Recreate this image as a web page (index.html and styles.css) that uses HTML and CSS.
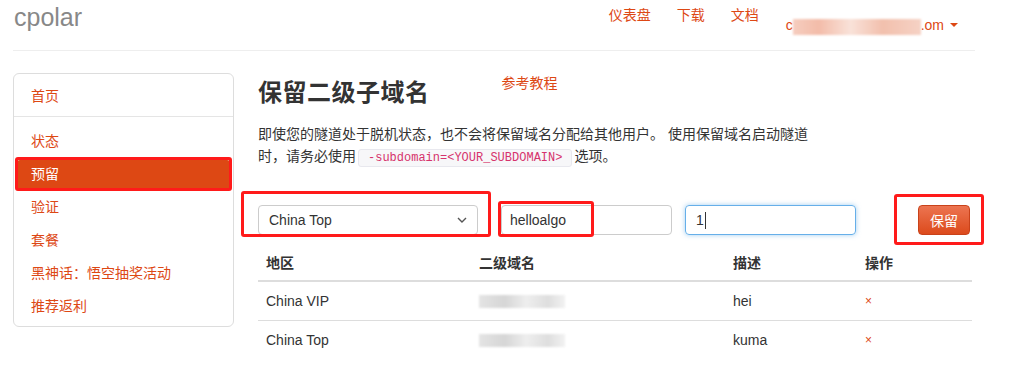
FILE: index.html
```html
<!DOCTYPE html>
<html lang="zh-CN">
<head>
    <meta charset="UTF-8">
    <title>cpolar - 保留二级子域名</title>
    <link rel="stylesheet" href="styles.css">
</head>
<body>
    <div class="page">
        <header class="topbar">
            <div class="brand">cpolar</div>
            <nav class="topnav">
                <a href="#">仪表盘</a>
                <a href="#">下载</a>
                <a href="#">文档</a>
                <a href="#" class="account">c<span class="blur-mail"></span>.om <span class="caret"></span></a>
            </nav>
        </header>

        <div class="main">
            <!-- Sidebar -->
            <aside class="sidebar">
                <ul class="side-list">
                    <li><a href="#">首页</a></li>
                </ul>
                <div class="side-divider"></div>
                <ul class="side-list">
                    <li><a href="#">状态</a></li>
                    <li class="active mark mark-nav"><a href="#">预留</a></li>
                    <li><a href="#">验证</a></li>
                    <li><a href="#">套餐</a></li>
                    <li><a href="#">黑神话：悟空抽奖活动</a></li>
                    <li><a href="#">推荐返利</a></li>
                </ul>
            </aside>

            <!-- Content -->
            <section class="content">
                <div class="title-row">
                    <h1>保留二级子域名</h1>
                    <a href="#" class="guide">参考教程</a>
                </div>
                <p class="intro"><span>即使您的隧道处于脱机状态，也不会将保留域名分配给其他用户。 使用保留域名启动隧道时，请务必使用</span><code>-subdomain=&lt;YOUR_SUBDOMAIN&gt;</code><span>选项。</span></p>

                <form class="reserve-form">
                    <div class="field field-region mark mark-select">
                        <div class="select-box">
                            <span>China Top</span>
                            <svg width="10" height="6" viewBox="0 0 10 6"><path d="M1 1l4 4 4-4" fill="none" stroke="#555" stroke-width="1.4"/></svg>
                        </div>
                    </div>
                    <div class="field field-name mark mark-name">
                        <div class="input-box">helloalgo</div>
                    </div>
                    <div class="field field-desc">
                        <div class="input-box focused">1<span class="cursor"></span></div>
                    </div>
                    <div class="field field-btn mark mark-btn">
                        <button type="button">保留</button>
                    </div>
                </form>

                <table class="domains">
                    <thead>
                        <tr>
                            <th class="c-region">地区</th>
                            <th class="c-name">二级域名</th>
                            <th class="c-desc">描述</th>
                            <th class="c-op">操作</th>
                        </tr>
                    </thead>
                    <tbody>
                        <tr>
                            <td>China VIP</td>
                            <td><span class="blur-cell"></span></td>
                            <td>hei</td>
                            <td><a href="#" class="remove">×</a></td>
                        </tr>
                        <tr>
                            <td>China Top</td>
                            <td><span class="blur-cell"></span></td>
                            <td>kuma</td>
                            <td><a href="#" class="remove">×</a></td>
                        </tr>
                    </tbody>
                </table>
            </section>
        </div>
    </div>
</body>
</html>
```

FILE: styles.css
```css
body {
    margin: 0;
    background: #fff;
    color: #333;
    font-family: "Liberation Sans", "Noto Sans CJK SC", sans-serif;
    font-size: 14px;
}
a {
    color: #dd4814;
    text-decoration: none;
}
.page {
    width: 962px;
    margin-left: 13px;
}

/* header */
.topbar {
    height: 50px;
    border-bottom: 1px solid #eee;
    display: flex;
    justify-content: space-between;
}
.brand {
    font-size: 25px;
    color: #888;
    padding: 2px 0 0 1px;
    line-height: 30px;
}
.topnav {
    display: flex;
    padding-right: 17px;
    line-height: 30px;
}
.topnav a {
    margin-left: 26px;
}
.topnav a.account {
    margin-left: 27px;
    display: flex;
    align-items: center;
}
.blur-mail {
    display: inline-block;
    width: 128px;
    height: 16px;
    margin-top: 4px;
    background: linear-gradient(90deg, #f6cdbf 0%, #f3bca9 20%, #f9e2d9 45%, #f2c0ad 70%, #f6d2c5 100%);
    filter: blur(1px);
}
.caret {
    display: inline-block;
    width: 0;
    height: 0;
    margin-left: 6px;
    border-top: 4px solid #dd4814;
    border-left: 4px solid transparent;
    border-right: 4px solid transparent;
}

/* layout */
.main {
    display: flex;
    margin-top: 22px;
}

/* sidebar */
.sidebar {
    width: 219px;
    border: 1px solid #ddd;
    border-radius: 6px;
    padding: 8px 0 5px;
    align-self: flex-start;
}
.side-list {
    list-style: none;
    margin: 0;
    padding: 0;
}
.side-list li {
    margin: 0 3px;
    border-radius: 3px;
}
.side-list li + li {
    margin-top: 4px;
}
.side-list a {
    display: block;
    padding: 5px 14px;
    line-height: 19px;
}
.side-list li.active {
    background: #dd4814;
}
.side-list li.active a {
    color: #fff;
}
.side-divider {
    height: 1px;
    background: #e5e5e5;
    margin: 5px 0 10px;
}

/* red annotation boxes */
.mark {
    position: relative;
}
.mark::after {
    content: "";
    position: absolute;
    border: 3px solid #ff1a1a;
    border-radius: 3px;
    pointer-events: none;
}
.mark-nav::after {
    top: -3px;
    bottom: -2px;
    left: -2px;
    right: -2px;
}
.mark-select::after {
    top: -14px;
    bottom: -2px;
    left: -17px;
    right: -13px;
}
.mark-name::after {
    top: -4px;
    bottom: -2px;
    left: -3px;
    right: 78px;
}
.mark-btn::after {
    top: -11px;
    bottom: -10px;
    left: -24px;
    right: -14px;
}

/* content */
.content {
    margin-left: 24px;
    width: 714px;
}
.title-row {
    display: flex;
    align-items: flex-start;
}
h1 {
    margin: 3px 0 0;
    font-size: 24px;
    line-height: 34px;
    font-weight: bold;
    letter-spacing: 0.5px;
}
.guide {
    margin-left: 72px;
    line-height: 20px;
}
.intro {
    margin: 13px 0 0;
    width: 560px;
    line-height: 22px;
}
.intro code {
    display: inline-block;
    font-family: "Liberation Mono", monospace;
    font-size: 12px;
    line-height: 16px;
    color: #d6336c;
    background: #f7f7f9;
    border: 1px solid #e8e8ee;
    border-radius: 3px;
    padding: 0 9px;
    margin: 0 2px;
}

/* form */
.reserve-form {
    display: flex;
    margin-top: 38px;
}
.select-box,
.input-box {
    box-sizing: border-box;
    height: 30px;
    border: 1px solid #ccc;
    border-radius: 4px;
    display: flex;
    align-items: center;
    padding: 0 10px;
    font-size: 14px;
}
.field-region {
    width: 220px;
}
.select-box {
    justify-content: space-between;
}
.field-name {
    width: 171px;
    margin-left: 23px;
}
.field-name .input-box {
    padding-left: 8px;
}
.field-desc {
    width: 171px;
    margin-left: 13px;
}
.input-box.focused {
    border-color: #66afe9;
    box-shadow: 0 0 5px rgba(102, 175, 233, 0.6);
}
.cursor {
    display: inline-block;
    width: 1px;
    height: 17px;
    background: #333;
    margin-left: 1px;
}
.field-btn {
    margin-left: 62px;
}
button {
    height: 30px;
    padding: 0 11px;
    border: 1px solid #c9421a;
    border-radius: 4px;
    background: linear-gradient(#ec7451, #dc4a1c);
    color: #fff;
    font-family: "Liberation Sans", "Noto Sans CJK SC", sans-serif;
    font-size: 14px;
    cursor: pointer;
}

/* table */
.domains {
    width: 714px;
    border-collapse: collapse;
    margin-top: 10px;
}
.domains th,
.domains td {
    text-align: left;
    padding: 8px 8px 9px;
    line-height: 20px;
}
.domains th {
    font-weight: bold;
    border-bottom: 2px solid #ddd;
    padding-bottom: 7px;
}
.domains td {
    border-top: 1px solid #ddd;
}
.domains tbody tr:first-child td {
    border-top: none;
}
.c-region { width: 197px; }
.c-name { width: 238px; }
.c-desc { width: 116px; }
.blur-cell {
    display: inline-block;
    width: 86px;
    height: 13px;
    vertical-align: middle;
    background: linear-gradient(90deg, #e4e4e4 0%, #d6d6d6 30%, #eeeeee 55%, #dedede 80%, #f2f2f2 100%);
    filter: blur(1px);
}
.remove {
    font-size: 12px;
}
```
